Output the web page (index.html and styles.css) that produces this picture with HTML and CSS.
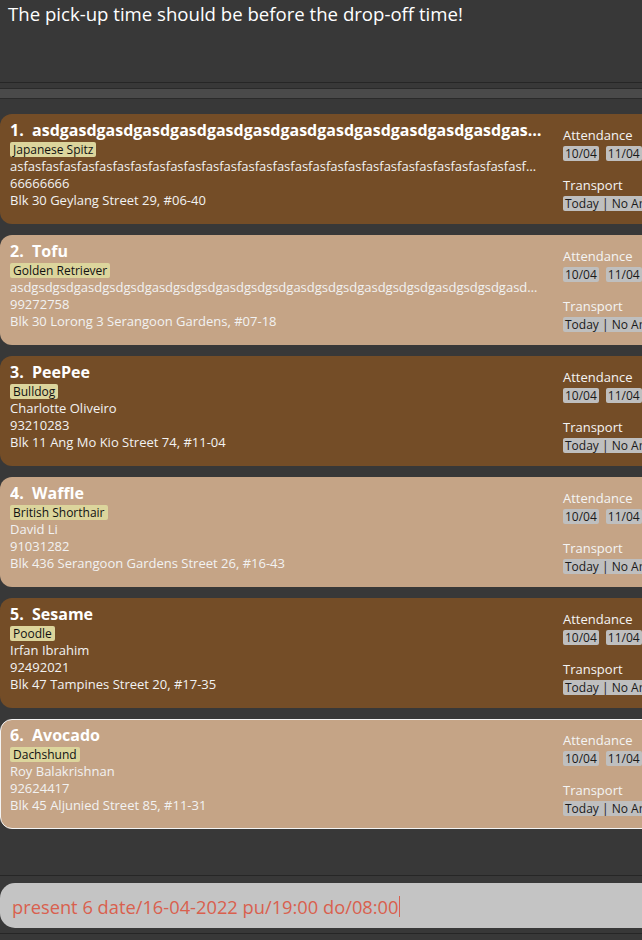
FILE: index.html
```html
<!DOCTYPE html>
<html>
<head>
<meta charset="utf-8">
<link rel="stylesheet" href="styles.css">
</head>
<body>
<div class="app">
  <div class="result">The pick-up time should be before the drop-off time!</div>
  <div class="splitter"></div>
  <div class="list">
    <div class="card dark">
      <div class="info">
        <div class="name">1.&nbsp; asdgasdgasdgasdgasdgasdgasdgasdgasdgasdgasdgasdgasdgasdgasdgasdgasdgas</div>
        <div class="tagrow"><span class="tag">Japanese Spitz</span></div>
        <div class="line">asfasfasfasfasfasfasfasfasfasfasfasfasfasfasfasfasfasfasfasfasfasfasfasfasfasfasfasfasfasfasfasfasfasfasfasfas</div>
        <div class="line">66666666</div>
        <div class="line">Blk 30 Geylang Street 29, #06-40</div>
      </div>
      <div class="side">
        <div class="label">Attendance</div>
        <div class="chips"><span class="chip">10/04</span><span class="chip">11/04</span></div>
        <div class="label second">Transport</div>
        <div class="chips"><span class="chip">Today | No Arrangement</span></div>
      </div>
    </div>
    <div class="card light">
      <div class="info">
        <div class="name">2.&nbsp; Tofu</div>
        <div class="tagrow"><span class="tag">Golden Retriever</span></div>
        <div class="line">asdgsdgsdgasdgsdgsdgasdgsdgsdgasdgsdgsdgasdgsdgsdgasdgsdgsdgasdgsdgsdgasdgsdgsdgasdgsdgasdgsdgsdgasdgsdgsdga</div>
        <div class="line">99272758</div>
        <div class="line">Blk 30 Lorong 3 Serangoon Gardens, #07-18</div>
      </div>
      <div class="side">
        <div class="label">Attendance</div>
        <div class="chips"><span class="chip">10/04</span><span class="chip">11/04</span></div>
        <div class="label second">Transport</div>
        <div class="chips"><span class="chip">Today | No Arrangement</span></div>
      </div>
    </div>
    <div class="card dark">
      <div class="info">
        <div class="name">3.&nbsp; PeePee</div>
        <div class="tagrow"><span class="tag">Bulldog</span></div>
        <div class="line">Charlotte Oliveiro</div>
        <div class="line">93210283</div>
        <div class="line">Blk 11 Ang Mo Kio Street 74, #11-04</div>
      </div>
      <div class="side">
        <div class="label">Attendance</div>
        <div class="chips"><span class="chip">10/04</span><span class="chip">11/04</span></div>
        <div class="label second">Transport</div>
        <div class="chips"><span class="chip">Today | No Arrangement</span></div>
      </div>
    </div>
    <div class="card light">
      <div class="info">
        <div class="name">4.&nbsp; Waffle</div>
        <div class="tagrow"><span class="tag">British Shorthair</span></div>
        <div class="line">David Li</div>
        <div class="line">91031282</div>
        <div class="line">Blk 436 Serangoon Gardens Street 26, #16-43</div>
      </div>
      <div class="side">
        <div class="label">Attendance</div>
        <div class="chips"><span class="chip">10/04</span><span class="chip">11/04</span></div>
        <div class="label second">Transport</div>
        <div class="chips"><span class="chip">Today | No Arrangement</span></div>
      </div>
    </div>
    <div class="card dark">
      <div class="info">
        <div class="name">5.&nbsp; Sesame</div>
        <div class="tagrow"><span class="tag">Poodle</span></div>
        <div class="line">Irfan Ibrahim</div>
        <div class="line">92492021</div>
        <div class="line">Blk 47 Tampines Street 20, #17-35</div>
      </div>
      <div class="side">
        <div class="label">Attendance</div>
        <div class="chips"><span class="chip">10/04</span><span class="chip">11/04</span></div>
        <div class="label second">Transport</div>
        <div class="chips"><span class="chip">Today | No Arrangement</span></div>
      </div>
    </div>
    <div class="card light selected">
      <div class="info">
        <div class="name">6.&nbsp; Avocado</div>
        <div class="tagrow"><span class="tag">Dachshund</span></div>
        <div class="line">Roy Balakrishnan</div>
        <div class="line">92624417</div>
        <div class="line">Blk 45 Aljunied Street 85, #11-31</div>
      </div>
      <div class="side">
        <div class="label">Attendance</div>
        <div class="chips"><span class="chip">10/04</span><span class="chip">11/04</span></div>
        <div class="label second">Transport</div>
        <div class="chips"><span class="chip">Today | No Arrangement</span></div>
      </div>
    </div>
  </div>
  <div class="command"><span class="cmdtext">present 6 date/16-04-2022 pu/19:00 do/08:00</span><span class="caret"></span></div>
  <div class="footer"></div>
</div>
</body>
</html>
```
FILE: styles.css
```css
html, body {
  margin: 0;
  padding: 0;
  background: #383838;
  overflow: hidden;
}
.app {
  width: 642px;
  height: 940px;
  display: flex;
  flex-direction: column;
  overflow: hidden;
  font-family: "Open Sans", "Liberation Sans", sans-serif;
}
.result {
  height: 83px;
  box-sizing: border-box;
  padding: 1px 8px;
  color: #ffffff;
  font-size: 18.6px;
  line-height: 26px;
  border-bottom: 1px solid #262626;
  flex: none;
}
.splitter {
  flex: none;
  height: 9px;
  margin-top: 5px;
  background: #4a4a4a;
  border-top: 1px solid #2a2a2a;
  border-bottom: 1px solid #2a2a2a;
}
.list {
  flex: none;
  height: 777px;
  padding-top: 15px;
  box-sizing: border-box;
  border-bottom: 1px solid #262626;
  overflow: hidden;
}
.card {
  width: 720px;
  height: 110px;
  box-sizing: border-box;
  border-radius: 12px;
  display: flex;
  padding: 7px 10px 8px;
  margin-bottom: 11px;
  color: #f2f2f2;
}
.card.dark { background: #744d27; }
.card.light { background: #c5a486; }
.card.selected {
  border: 1px solid #f4f4f4;
  padding: 6px 9px 7px;
  margin-top: 1px;
}
.info {
  width: 532px;
  flex: none;
  display: flex;
  flex-direction: column;
  min-width: 0;
}
.name {
  font-size: 16px;
  font-weight: 700;
  line-height: 19px;
  white-space: nowrap;
  overflow: hidden;
  text-overflow: ellipsis;
  color: #ffffff;
}
.tagrow {
  margin-top: 1px;
  height: 17px;
  display: flex;
  align-items: center;
}
.tag {
  background: #dcd59c;
  color: #111111;
  font-size: 12px;
  line-height: 15px;
  padding: 0 3px;
  border-radius: 2px;
}
.line {
  font-size: 13px;
  line-height: 17px;
  white-space: nowrap;
  overflow: hidden;
  text-overflow: ellipsis;
}
.side {
  margin-left: 21px;
  padding-top: 7px;
  display: flex;
  flex-direction: column;
}
.label {
  font-size: 13px;
  line-height: 15px;
  color: #f4f4f4;
}
.label.second {
  margin-top: 17px;
}
.chips {
  display: flex;
  gap: 7px;
  margin-top: 3px;
}
.chip {
  background: #bfbfbf;
  color: #1a1a1a;
  font-size: 12px;
  line-height: 15px;
  padding: 0 2px;
  border-radius: 2px;
  white-space: nowrap;
}
.command {
  flex: none;
  margin-top: 7px;
  height: 45px;
  width: 700px;
  box-sizing: border-box;
  background: #c4c4c4;
  border-radius: 15px 0 0 15px;
  display: flex;
  align-items: center;
  padding-left: 12px;
  padding-top: 2px;
  font-size: 18.3px;
  color: #d9604e;
}
.caret {
  width: 1px;
  height: 21px;
  background: #d9604e;
}
.footer {
  flex: none;
  margin-top: 5px;
  border-top: 1px solid #262626;
  height: 10px;
}
```
